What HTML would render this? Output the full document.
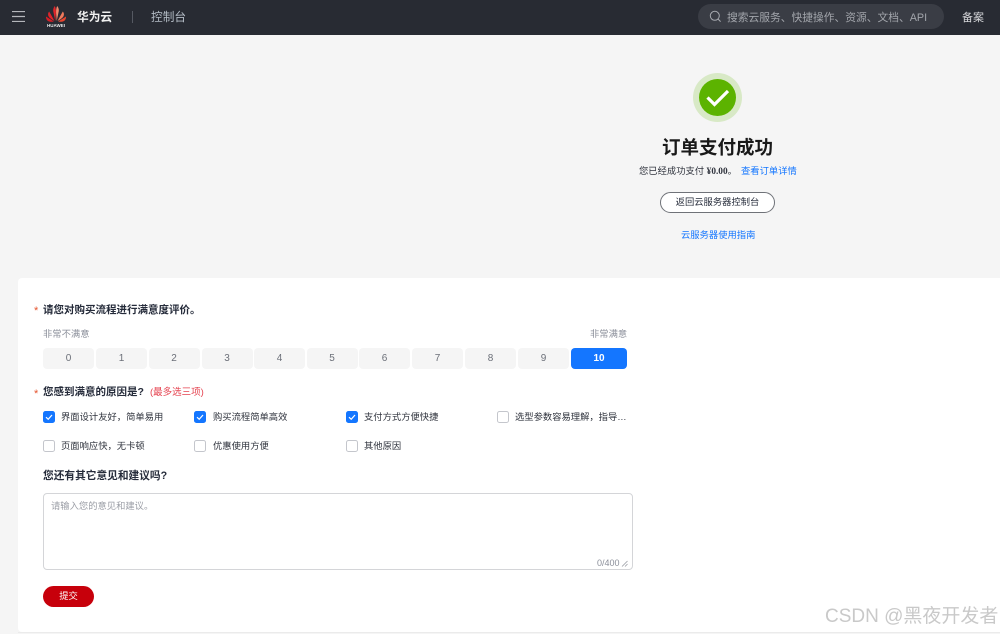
<!DOCTYPE html>
<html lang="zh-CN">
<head>
<meta charset="utf-8">
<title>订单支付成功</title>
<style>
html,body{margin:0;padding:0;width:1000px;height:634px;overflow:hidden;background:#f5f5f5;}
body{position:relative;font-family:"Liberation Sans","Noto Sans CJK SC",sans-serif;color:#252b3a;}
.t{position:absolute;white-space:nowrap;font-size:9.300px;line-height:14px;}
.b{position:absolute;}
.h{font-size:10.500px;font-weight:700;color:#252b3a;}
.cell{position:absolute;top:348px;height:21px;width:51px;background:#f5f5f5;border-radius:4px;text-align:center;font-size:10px;line-height:21px;color:#6b6f78;}
.cb{position:absolute;width:10px;height:10px;border:1px solid #c4c6cc;border-radius:2.500px;background:#fff;}
.cb.on{background:#1476ff;border-color:#1476ff;}
.cb svg{position:absolute;left:0;top:0;}
.lbl{color:#2f333d;}
</style>
</head>
<body>
<!-- header -->
<div class="b" style="left:0;top:0;width:1000px;height:35px;background:#282b33;"></div>
<svg class="b" style="left:12px;top:11px;" width="13" height="11" viewBox="0 0 13 11"><path d="M0 .5H13M0 5.500H13M0 10.500H13" stroke="#b4b6bb" stroke-width="1.200"/></svg>
<svg class="b" style="left:45px;top:5px;" width="22" height="23" viewBox="0 0 22 23">
<path d="M10.300 16 8.200 6 C8 3.800 8.800 2.200 9.800 1 C10.800 3 11 5 10.900 8Z" fill="#e1242a"/>
<path d="M11.700 16 13.800 6 C14 3.800 13.200 2.200 12.200 1 C11.200 3 11 5 11.100 8Z" fill="#f28a6c"/>
<path d="M9.500 16 4.200 6.500 C3 7.800 2.800 9.500 3.400 11 C4.400 13 7 14.800 9.500 16Z" fill="#e1242a"/>
<path d="M12.500 16 17.800 6.500 C19 7.800 19.200 9.500 18.600 11 C17.600 13 15 14.800 12.500 16Z" fill="#f07a5c"/>
<path d="M8.800 16.500 1 11.500 C.8 13.200 1.500 15 3 16 C4.800 17 6.800 16.900 8.800 16.500Z" fill="#d81e26"/>
<path d="M13.200 16.500 21 11.500 C21.200 13.200 20.500 15 19 16 C17.200 17 15.200 16.900 13.200 16.500Z" fill="#e8452f"/>
</svg>
<div class="t" style="left:45px;top:22px;width:22px;text-align:center;font-size:4.500px;line-height:7px;font-weight:700;color:#e8e8e8;">HUAWEI</div>
<div class="t" style="left:77px;top:11px;font-size:11.700px;font-weight:700;color:#f0f0f0;">华为云</div>
<div class="b" style="left:132px;top:11px;width:1px;height:12px;background:#555962;"></div>
<div class="t" style="left:151px;top:11px;font-size:11.700px;color:#b4bcc6;">控制台</div>
<div class="b" style="left:698px;top:4px;width:246px;height:25px;border-radius:13px;background:#3a3d45;"></div>
<svg class="b" style="left:709px;top:10px;" width="13" height="13" viewBox="0 0 13 13" fill="none" stroke="#a6a9af" stroke-width="1"><circle cx="5.800" cy="5.800" r="4.500"/><path d="M9 9l2.600 2.600"/></svg>
<div class="t" style="left:727px;top:11px;font-size:10.750px;color:#a2a5ab;">搜索云服务、快捷操作、资源、文档、API</div>
<div class="t" style="left:962px;top:11px;font-size:11px;color:#d5d6d9;">备案</div>

<!-- success -->
<div class="b" style="left:693px;top:73px;width:49px;height:49px;border-radius:50%;background:#d8e9c6;"></div>
<div class="b" style="left:699px;top:79px;width:37px;height:37px;border-radius:50%;background:#5cb300;"></div>
<svg class="b" style="left:699px;top:79px;" width="37" height="37" viewBox="0 0 37 37"><path d="M8.500 18.500 15.500 25.500 29 12" fill="none" stroke="#fff" stroke-width="3.200"/></svg>
<div class="t" style="left:662px;top:136px;font-size:18.500px;line-height:24px;font-weight:700;color:#191919;">订单支付成功</div>
<div class="t" style="left:639px;top:164px;color:#2f333d;">您已经成功支付 <b style="font-family:'Liberation Serif',serif;">¥0.00</b>。</div>
<div class="t" style="left:741px;top:164px;color:#1476ff;">查看订单详情</div>
<div class="b" style="left:660px;top:192px;width:113px;height:19px;border:1px solid #6f7278;border-radius:11px;background:#fff;text-align:center;font-size:9.300px;line-height:19px;color:#252b3a;white-space:nowrap;">返回云服务器控制台</div>
<div class="t" style="left:681px;top:228px;color:#1476ff;">云服务器使用指南</div>

<!-- card -->
<div class="b" style="left:18px;top:278px;width:982px;height:354px;background:#fff;border-radius:4px 0 0 4px;"></div>
<div class="b" style="left:18px;top:632px;width:982px;height:1px;background:#ebebeb;"></div>

<div class="t" style="left:34px;top:304px;color:#e5532d;font-size:11px;">*</div>
<div class="t h" style="left:43px;top:303px;">请您对购买流程进行满意度评价。</div>
<div class="t" style="left:43px;top:327px;color:#8a8e99;">非常不满意</div>
<div class="t" style="left:590px;top:327px;color:#8a8e99;">非常满意</div>

<div class="cell" style="left:43px;">0</div>
<div class="cell" style="left:96px;">1</div>
<div class="cell" style="left:148.500px;">2</div>
<div class="cell" style="left:201.500px;">3</div>
<div class="cell" style="left:254px;">4</div>
<div class="cell" style="left:306.500px;">5</div>
<div class="cell" style="left:359px;">6</div>
<div class="cell" style="left:412px;">7</div>
<div class="cell" style="left:465px;">8</div>
<div class="cell" style="left:518px;">9</div>
<div class="cell" style="left:571px;width:56px;background:#1476ff;color:#fff;font-weight:700;">10</div>

<div class="t" style="left:34px;top:387px;color:#e5532d;font-size:11px;">*</div>
<div class="t h" style="left:43px;top:385px;">您感到满意的原因是?</div>
<div class="t" style="left:150px;top:386px;font-size:9.500px;color:#e5424f;">(最多选三项)</div>

<div class="cb on" style="left:43px;top:411px;"><svg width="10" height="10" viewBox="0 0 10 10"><path d="M2 5.200 4.200 7.300 8 3" fill="none" stroke="#fff" stroke-width="1.200"/></svg></div>
<div class="t lbl" style="left:61px;top:410px;">界面设计友好，简单易用</div>
<div class="cb on" style="left:194px;top:411px;"><svg width="10" height="10" viewBox="0 0 10 10"><path d="M2 5.200 4.200 7.300 8 3" fill="none" stroke="#fff" stroke-width="1.200"/></svg></div>
<div class="t lbl" style="left:213px;top:410px;">购买流程简单高效</div>
<div class="cb on" style="left:346px;top:411px;"><svg width="10" height="10" viewBox="0 0 10 10"><path d="M2 5.200 4.200 7.300 8 3" fill="none" stroke="#fff" stroke-width="1.200"/></svg></div>
<div class="t lbl" style="left:364px;top:410px;">支付方式方便快捷</div>
<div class="cb" style="left:497px;top:411px;"></div>
<div class="t lbl" style="left:515px;top:410px;">选型参数容易理解，指导…</div>

<div class="cb" style="left:43px;top:440px;"></div>
<div class="t lbl" style="left:61px;top:439px;">页面响应快，无卡顿</div>
<div class="cb" style="left:194px;top:440px;"></div>
<div class="t lbl" style="left:213px;top:439px;">优惠使用方便</div>
<div class="cb" style="left:346px;top:440px;"></div>
<div class="t lbl" style="left:364px;top:439px;">其他原因</div>

<div class="t h" style="left:43px;top:469px;font-size:10.700px;">您还有其它意见和建议吗?</div>
<div class="b" style="left:43px;top:493px;width:588px;height:75px;border:1px solid #d4d5d8;border-radius:4px;background:#fff;"></div>
<div class="t" style="left:51px;top:499px;color:#9a9da5;">请输入您的意见和建议。</div>
<div class="t" style="left:597px;top:556px;font-size:9px;color:#8a8e99;">0/400</div>
<svg class="b" style="left:621px;top:560px;" width="7" height="7" viewBox="0 0 7 7"><path d="M1 6.500 6.500 1M4 6.500 6.500 4" stroke="#9a9da5" stroke-width=".8" fill="none"/></svg>

<div class="b" style="left:43px;top:586px;width:51px;height:21px;border-radius:11px;background:#c7000b;text-align:center;color:#fff;font-size:9.300px;line-height:21px;">提交</div>

<div class="t" style="left:825px;top:605px;font-size:19px;line-height:24px;color:#c9c9c9;">CSDN @黑夜开发者</div>
</body>
</html>
